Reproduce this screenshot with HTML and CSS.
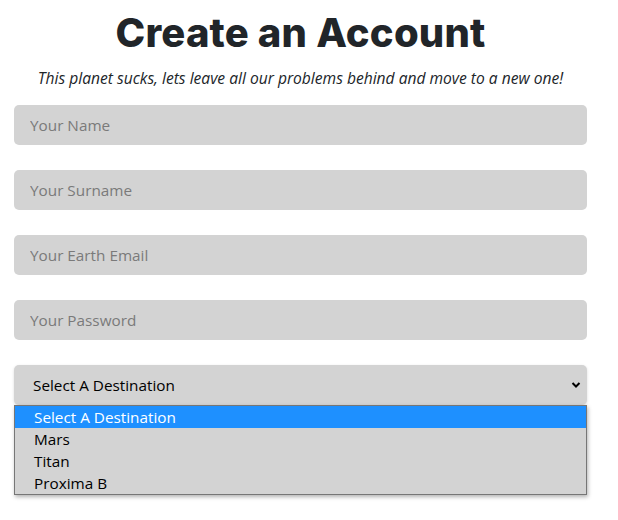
FILE: index.html
```html
<!DOCTYPE html>
<html>
<head>
<meta charset="utf-8">
<link rel="stylesheet" href="styles.css">
</head>
<body>
<main class="page">
  <h1 class="title">Create an Account</h1>
  <p class="subtitle">This planet sucks, lets leave all our problems behind and move to a new one!</p>
  <form class="form">
    <input class="field" type="text" placeholder="Your Name">
    <input class="field" type="text" placeholder="Your Surname">
    <input class="field" type="email" placeholder="Your Earth Email">
    <input class="field" type="password" placeholder="Your Password">
    <div class="select-wrap">
      <div class="select">
        <span class="select-text">Select A Destination</span>
        <svg class="chevron" width="10" height="8" viewBox="0 0 10 8"><path d="M1.5 2 L5 5.5 L8.5 2" fill="none" stroke="#000" stroke-width="2"/></svg>
      </div>
      <div class="dropdown">
        <div class="opt opt-active">Select A Destination</div>
        <div class="opt">Mars</div>
        <div class="opt">Titan</div>
        <div class="opt">Proxima B</div>
      </div>
    </div>
  </form>
</main>
</body>
</html>
```
FILE: styles.css
```css
html, body {
  margin: 0;
  padding: 0;
  background: #fff;
}
.page {
  width: 573px;
  margin-left: 14px;
  padding-bottom: 8px;
  font-family: "Open Sans", "Noto Sans", sans-serif;
  color: #212529;
}
.title {
  margin: 0;
  padding-top: 7px;
  text-align: center;
  font-family: Inter, sans-serif;
  font-weight: 800;
  font-size: 40px;
  line-height: 52px;
  letter-spacing: 0.2px;
  color: #212529;
}
.subtitle {
  margin: 8px 0 0;
  text-align: center;
  font-style: italic;
  font-size: 15.6px;
  line-height: 22px;
  color: #212529;
}
.form {
  display: flex;
  flex-direction: column;
  gap: 25px;
  margin-top: 16px;
}
.field {
  box-sizing: border-box;
  height: 40px;
  width: 100%;
  border: none;
  border-radius: 5px;
  background: #d3d3d3;
  padding: 0 16px;
  font-family: "Open Sans", "Noto Sans", sans-serif;
  font-size: 15.3px;
  color: #212529;
  outline: none;
}
.field::placeholder {
  color: #7a7a7a;
}
.select-wrap {
  display: flex;
  flex-direction: column;
}
.select {
  box-sizing: border-box;
  height: 40px;
  border-radius: 5px;
  background: #d3d3d3;
  display: flex;
  align-items: center;
  justify-content: space-between;
  padding: 0 4px 0 19px;
  font-size: 15.3px;
  color: #000;
  box-shadow: 0 1px 3px rgba(0,0,0,0.15);
}
.chevron {
  margin-right: 2px;
}
.dropdown {
  box-sizing: border-box;
  background: #d3d3d3;
  border: 1px solid #767676;
  box-shadow: 1px 2px 4px rgba(0,0,0,0.3);
}
.opt {
  height: 22px;
  line-height: 22px;
  padding-left: 19px;
  font-size: 15.3px;
  color: #000;
}
.opt-active {
  background: #1e90ff;
  color: #fff;
}
```
